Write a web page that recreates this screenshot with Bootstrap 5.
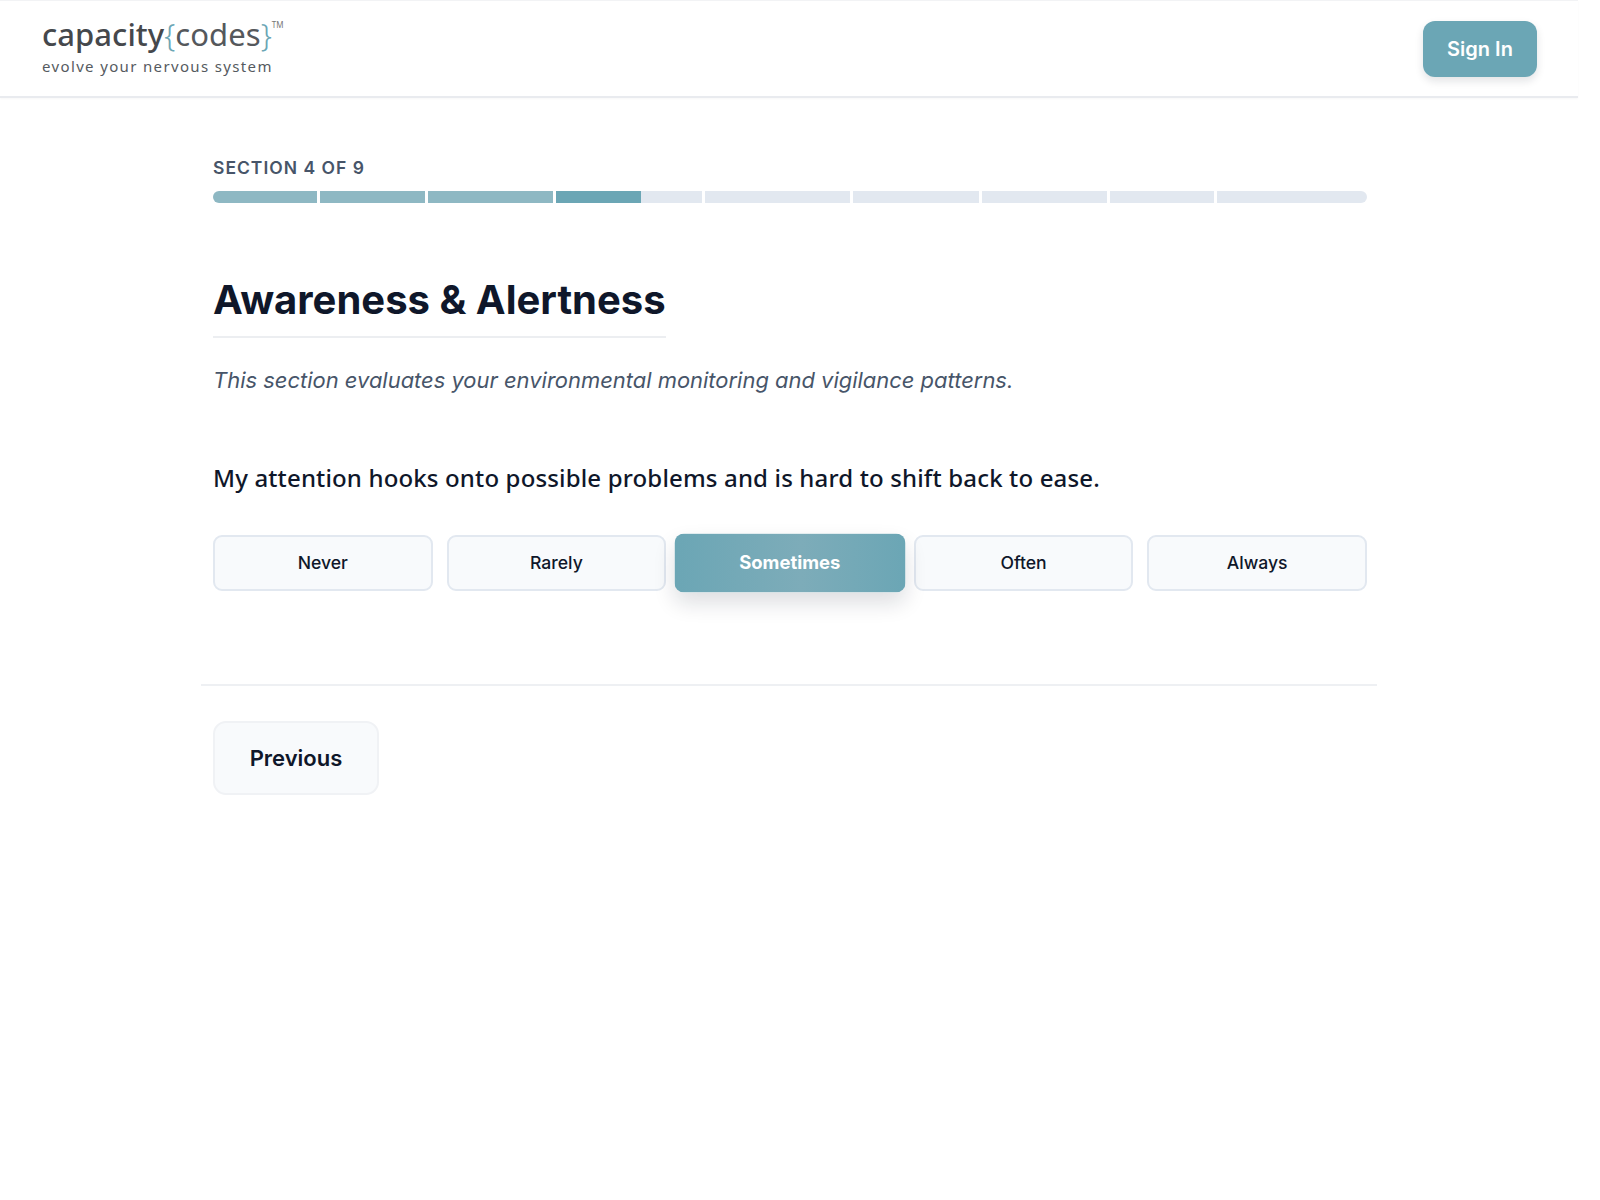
<!doctype html>
<html lang="en"><head><meta charset="utf-8"><title>Awareness &amp; Alertness</title>
<link rel="stylesheet" href="https://cdn.jsdelivr.net/npm/bootstrap@5.3.0/dist/css/bootstrap.min.css">
<style>
html,body{height:100%;background:#fff}
body{font-family:Inter,"Liberation Sans",sans-serif;color:#0f172a}
.page-shell{width:1578px;min-height:1200px}
.top-bar{height:98px;padding:0 41px 0 42px;border-bottom:2px solid #e9ebef;border-top:1px solid #f2f3f5;box-shadow:0 1px 2px rgba(15,23,42,.03)}
.logo-box{line-height:1;padding-bottom:4px}
.logo-main{font-family:"Noto Sans",sans-serif;font-size:31px;font-weight:500;line-height:34px;color:#45484c;letter-spacing:.05px}
.logo-main .thin{font-weight:400;color:#55585c}
.logo-main .brace{color:#6ba6b5;font-weight:300}
.logo-main sup{font-size:8px;top:-2.3em;letter-spacing:0;color:#777;font-weight:400}
.logo-sub{font-family:"Noto Sans",sans-serif;font-size:15px;color:#555a60;letter-spacing:1.35px;margin-top:5px;line-height:20px}
.signin-btn{width:114px;height:56px;background:#6ba6b5;border:0;border-radius:12px;color:#fff;font-weight:600;font-size:20px;box-shadow:0 4px 8px rgba(15,23,42,.12)}
.signin-btn:hover{background:#6ba6b5;color:#fff}
.quiz-wrap{width:1176px;padding:0 10px 0 12px}
.section-label{font-size:17.5px;font-weight:600;letter-spacing:1px;color:#475569;line-height:22px;margin:59px 0 0}
.seg-bar{height:12px;gap:3px;margin-top:12px;border-radius:6px;overflow:hidden}
.seg{background:#e2e8f0;min-width:0}
.seg-done{background:#8eb8c3}
.seg-fill{background:#6ba6b5;height:100%}
.sec-title{display:inline-block;font-size:40px;font-weight:700;letter-spacing:0;line-height:51px;color:#0f172a;padding-bottom:11px;border-bottom:2px solid #eceef1;margin:71px 0 0}
.sec-desc{font-style:italic;font-size:21.95px;line-height:32px;color:#475569;margin:26px 0 0}
.q-text{font-family:"Noto Sans",sans-serif;font-size:24px;font-weight:500;line-height:36px;color:#0f172a;letter-spacing:.15px;margin:64px 0 0}
.ans-row{gap:14px;margin-top:39px;align-items:center}
.ans-btn{flex:1 1 0;height:56px;background:#f8fafc;border:2px solid #e2e8f0;border-radius:9px;color:#0f172a;font-size:17.6px;font-weight:500;padding:0}
.ans-btn:hover{background:#f8fafc;border-color:#e2e8f0;color:#0f172a}
.ans-on,.ans-on:hover{transform:scale(1.05);background:linear-gradient(90deg,#6ba6b5,#7dacb9 55%,#6ba6b5) border-box;border-color:transparent;color:#fff;font-weight:700;box-shadow:0 10px 20px rgba(15,23,42,.14)}
.nav-rule{border-top:2px solid #eef0f3;margin-top:93px;padding:35px 12px 0}
.prev-btn{width:166px;height:74px;background:#f8fafc;border:2px solid #f0f2f5;border-radius:13px;color:#0f172a;font-size:22px;font-weight:600;padding:0}
.prev-btn:hover{background:#f8fafc;border-color:#f0f2f5;color:#0f172a}
</style></head>
<body>
<div class="page-shell">
<header class="top-bar d-flex align-items-center justify-content-between">
  <div class="logo-box">
    <div class="logo-main">capacity<span class="brace">{</span><span class="thin">codes</span><span class="brace">}</span><sup>TM</sup></div>
    <div class="logo-sub">evolve your nervous system</div>
  </div>
  <button class="btn signin-btn" type="button">Sign In</button>
</header>
<main class="quiz-wrap mx-auto">
  <p class="section-label">SECTION 4 OF 9</p>
  <div class="seg-bar d-flex">
    <div class="seg seg-done" style="flex:5 1 0"></div>
    <div class="seg seg-done" style="flex:5 1 0"></div>
    <div class="seg seg-done" style="flex:6 1 0"></div>
    <div class="seg" style="flex:7 1 0"><div class="seg-fill" style="width:58.5%"></div></div>
    <div class="seg" style="flex:7 1 0"></div>
    <div class="seg" style="flex:6 1 0"></div>
    <div class="seg" style="flex:6 1 0"></div>
    <div class="seg" style="flex:5 1 0"></div>
    <div class="seg" style="flex:7.2 1 0"></div>
  </div>
  <h1 class="sec-title">Awareness &amp; Alertness</h1>
  <p class="sec-desc">This section evaluates your environmental monitoring and vigilance patterns.</p>
  <p class="q-text">My attention hooks onto possible problems and is hard to shift back to ease.</p>
  <div class="ans-row d-flex">
    <button class="btn ans-btn" type="button">Never</button>
    <button class="btn ans-btn" type="button">Rarely</button>
    <button class="btn ans-btn ans-on" type="button">Sometimes</button>
    <button class="btn ans-btn" type="button">Often</button>
    <button class="btn ans-btn" type="button">Always</button>
  </div>
</main>
<div class="quiz-wrap mx-auto p-0">
  <div class="nav-rule">
    <button class="btn prev-btn" type="button">Previous</button>
  </div>
</div>
</div>
<script src="https://cdn.jsdelivr.net/npm/bootstrap@5.3.0/dist/js/bootstrap.bundle.min.js"></script>
</body></html>
